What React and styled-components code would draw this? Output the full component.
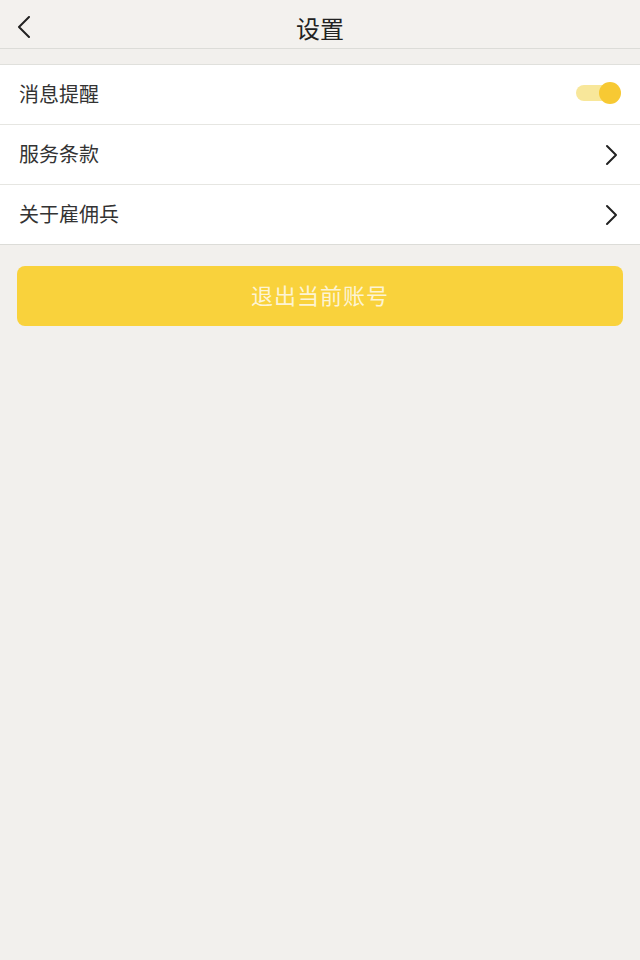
import styled, { createGlobalStyle } from "styled-components";

const GlobalStyle = createGlobalStyle`
  html, body {
    margin: 0;
    padding: 0;
    background: #f2f0ed;
    font-family: "Noto Sans CJK SC", "Noto Sans", sans-serif;
  }
`;

function Chevron({ left }) {
  return (
    <svg width="16" height="22" viewBox="0 0 16 22" fill="none">
      <path
        d={left ? "M13 1 L3 11 L13 21" : "M4 2 L13 11 L4 20"}
        stroke="#222"
        strokeWidth="2"
        strokeLinecap="round"
        strokeLinejoin="round"
      />
    </svg>
  );
}

export default function App() {
  return (
    <Page>
      <GlobalStyle />
      <Header>
        <BackButton>
          <Chevron left />
        </BackButton>
        <Title>设置</Title>
      </Header>
      <List>
        <Row>
          <Label>消息提醒</Label>
          <Toggle>
            <Knob />
          </Toggle>
        </Row>
        <Row>
          <Label>服务条款</Label>
          <Chevron />
        </Row>
        <Row last>
          <Label>关于雇佣兵</Label>
          <Chevron />
        </Row>
      </List>
      <LogoutButton>退出当前账号</LogoutButton>
    </Page>
  );
}

const Page = styled.div`
  min-height: 960px;
  background: #f2f0ed;
`;

const Header = styled.div`
  position: relative;
  height: 48px;
  display: flex;
  align-items: center;
  justify-content: center;
  background: #f3f1ee;
  border-bottom: 1px solid #dcdcd8;
`;

const BackButton = styled.div`
  position: absolute;
  left: 16px;
  top: 16px;
  display: flex;
`;

const Title = styled.div`
  font-size: 24px;
  color: #222;
  padding-top: 6px;
`;

const List = styled.div`
  margin-top: 15px;
  background: #fff;
  border-top: 1px solid #e0e0dc;
  border-bottom: 1px solid #dcdcd8;
`;

const Row = styled.div`
  height: 59px;
  display: flex;
  align-items: center;
  justify-content: space-between;
  padding: 0 21px 0 19px;
  border-bottom: ${(p) => (p.last ? "none" : "1px solid #e6e6e2")};
`;

const Label = styled.div`
  font-size: 20px;
  color: #333;
  margin-top: -3px;
`;

const Toggle = styled.div`
  position: relative;
  width: 34px;
  height: 16px;
  margin-right: 9px;
  margin-top: -3px;
  border-radius: 8px;
  background: #f8e79a;
`;

const Knob = styled.div`
  position: absolute;
  right: -11px;
  top: -3px;
  width: 22px;
  height: 22px;
  border-radius: 50%;
  background: #f7c933;
`;

const LogoutButton = styled.div`
  margin: 21px 17px 0;
  height: 60px;
  box-sizing: border-box;
  padding-bottom: 5px;
  border-radius: 8px;
  background: #f9d23c;
  color: #fdf4d4;
  font-size: 22px;
  display: flex;
  align-items: center;
  justify-content: center;
  letter-spacing: 1px;
`;
